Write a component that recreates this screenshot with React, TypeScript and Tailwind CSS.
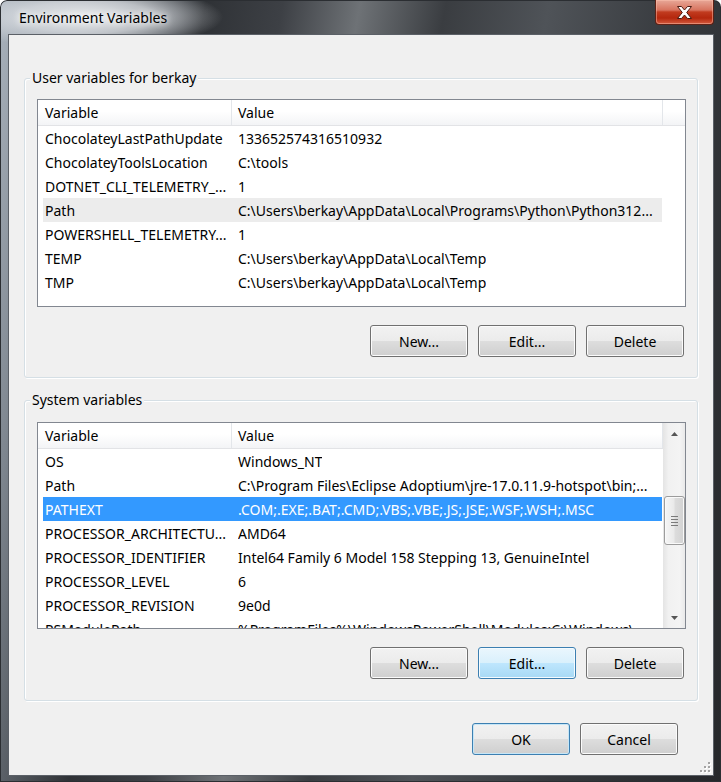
import React from "react";
import clsx from "clsx";

type Row = { name: string; value: string; state?: "hover" | "selected" };

const userVars: Row[] = [
  { name: "ChocolateyLastPathUpdate", value: "133652574316510932" },
  { name: "ChocolateyToolsLocation", value: "C:\\tools" },
  { name: "DOTNET_CLI_TELEMETRY_...", value: "1" },
  { name: "Path", value: "C:\\Users\\berkay\\AppData\\Local\\Programs\\Python\\Python312...", state: "hover" },
  { name: "POWERSHELL_TELEMETRY...", value: "1" },
  { name: "TEMP", value: "C:\\Users\\berkay\\AppData\\Local\\Temp" },
  { name: "TMP", value: "C:\\Users\\berkay\\AppData\\Local\\Temp" },
];

const systemVars: Row[] = [
  { name: "OS", value: "Windows_NT" },
  { name: "Path", value: "C:\\Program Files\\Eclipse Adoptium\\jre-17.0.11.9-hotspot\\bin;..." },
  { name: "PATHEXT", value: ".COM;.EXE;.BAT;.CMD;.VBS;.VBE;.JS;.JSE;.WSF;.WSH;.MSC", state: "selected" },
  { name: "PROCESSOR_ARCHITECTU...", value: "AMD64" },
  { name: "PROCESSOR_IDENTIFIER", value: "Intel64 Family 6 Model 158 Stepping 13, GenuineIntel" },
  { name: "PROCESSOR_LEVEL", value: "6" },
  { name: "PROCESSOR_REVISION", value: "9e0d" },
  { name: "PSModulePath", value: "%ProgramFiles%\\WindowsPowerShell\\Modules;C:\\Windows\\..." },
];

function Button({ label, variant }: { label: string; variant?: "hot" | "default" }) {
  return (
    <div
      className={clsx(
        "flex h-[32px] w-[98px] items-center justify-center rounded-[3px] border text-black",
        variant === "hot"
          ? "border-[#3c7fb1] bg-[linear-gradient(#eaf6fd_0%,#d9f0fc_50%,#bee6fd_51%,#a7d9f5_100%)] shadow-[inset_0_0_0_1px_#f4fbff]"
          : "bg-[linear-gradient(#f2f2f2_0%,#ebebeb_50%,#dddddd_51%,#cfcfcf_100%)]",
        variant === "default" && "border-[#3c7fb1] shadow-[inset_0_0_0_1px_#c6e6f7]",
        !variant && "border-[#707070] shadow-[inset_0_0_0_1px_#fbfbfb]"
      )}
    >
      {label}
    </div>
  );
}

function Header({ filler }: { filler?: boolean }) {
  return (
    <div className="flex h-[26px] shrink-0 items-center border-b border-[#e2e3e6] bg-[linear-gradient(#ffffff_0%,#ffffff_45%,#f3f4f6_100%)]">
      <div className="w-[193px] pl-[7px]">Variable</div>
      <div className="h-full w-px bg-[#e3e6ea]" />
      <div className="w-[430px] pl-[6px]">Value</div>
      <div className="h-full w-px bg-[#e3e6ea]" />
      {filler && <div className="flex-1" />}
    </div>
  );
}

function Rows({ rows }: { rows: Row[] }) {
  return (
    <div className="flex flex-col">
      {rows.map((r) => (
        <div key={r.name} className="flex h-[24px] shrink-0">
          <div
            className={clsx(
              "ml-[5px] flex w-[619px] items-center whitespace-nowrap",
              r.state === "selected" && "bg-[#3399ff] text-white",
              r.state === "hover" && "bg-[#ececec]"
            )}
          >
            <span className="w-[195px] shrink-0 overflow-hidden pl-[2px]">{r.name}</span>
            <span className="overflow-hidden">{r.value}</span>
          </div>
        </div>
      ))}
    </div>
  );
}

function Arrow({ up }: { up?: boolean }) {
  return (
    <div className="flex h-[21px] items-center justify-center">
      <svg width="7" height="4" viewBox="0 0 7 4">
        <polygon points={up ? "0,4 3.5,0 7,4" : "0,0 3.5,4 7,0"} fill="#555" />
      </svg>
    </div>
  );
}

function ScrollBar() {
  return (
    <div className="flex w-[22px] flex-col bg-[linear-gradient(90deg,#e4e4e4_0%,#f1f1f1_25%,#f4f4f4_75%,#e9e9e9_100%)] pl-px">
      <Arrow up />
      <div className="flex-1">
        <div className="mt-[52px] flex h-[49px] flex-col items-center justify-center gap-[2px] rounded-[3px] border border-[#9c9c9c] bg-[linear-gradient(90deg,#f6f6f6_0%,#eaeaea_45%,#dcdcdc_55%,#d2d2d2_100%)] shadow-[inset_0_0_0_1px_#fafafa]">
          <div className="h-px w-[7px] bg-[#7a7a7a]" />
          <div className="h-px w-[7px] bg-[#7a7a7a]" />
          <div className="h-px w-[7px] bg-[#7a7a7a]" />
          <div className="h-px w-[7px] bg-[#7a7a7a]" />
        </div>
      </div>
      <Arrow />
    </div>
  );
}

function GroupBox({ title, children, className }: { title: string; children: React.ReactNode; className?: string }) {
  return (
    <div
      className={clsx(
        "relative ml-[15px] w-[674px] rounded-[3px] border border-[#d5dfe5] shadow-[inset_1px_1px_0_#fff,1px_1px_0_#fff]",
        className
      )}
    >
      <span className="absolute left-[5px] top-[-11px] bg-[#f0f0f0] px-[2px] leading-[20px]">{title}</span>
      {children}
    </div>
  );
}

function Grip() {
  const dots = [
    [8, 0],
    [8, 4],
    [4, 4],
    [8, 8],
    [4, 8],
    [0, 8],
  ];
  return (
    <svg width="11" height="11" viewBox="0 0 11 11">
      {dots.map(([x, y]) => (
        <g key={`${x}-${y}`}>
          <rect x={x + 1} y={y + 1} width="2" height="2" fill="#ffffff" />
          <rect x={x} y={y} width="2" height="2" fill="#a3a3a3" />
        </g>
      ))}
    </svg>
  );
}

export default function App() {
  return (
    <div className="flex h-[782px] w-[721px] flex-col rounded-t-[7px] bg-[radial-gradient(135px_32px_at_88px_17px,rgba(236,238,240,0.97)_0%,rgba(225,228,232,0.72)_50%,rgba(200,205,210,0)_100%),linear-gradient(100deg,#aab3bd_0%,#7d858e_10%,#2f3236_24%,#3d4045_33%,#6e7276_42%,#3a3d41_52%,#4f5358_64%,#36393d_80%,#25272a_100%)] font-['Noto_Sans',sans-serif] text-[14px] text-black shadow-[inset_0_0_0_1px_#2b2e32]">
      {/* title bar */}
      <div className="flex h-[34px] shrink-0 items-start justify-between">
        <div className="ml-[19px] mt-[8px] leading-[20px] [text-shadow:0_0_6px_#fff,0_0_10px_#fff]">
          Environment Variables
        </div>
        <div className="mr-[7px] flex h-[25px] w-[59px] items-center justify-center rounded-b-[4px] border border-t-0 border-[#5e2116] bg-[linear-gradient(#e8a898_0%,#d7735e_42%,#c13b1f_50%,#b4270d_75%,#d35a3f_100%)] shadow-[inset_0_0_0_1px_rgba(255,200,180,0.45)]">
          <svg width="15" height="13" viewBox="0 0 15 13">
            <polygon
              points="0.5,0.5 4.5,0.5 7.5,4 10.5,0.5 14.5,0.5 9.7,6.5 14.5,12.5 10.5,12.5 7.5,9 4.5,12.5 0.5,12.5 5.3,6.5"
              fill="#ffffff"
              stroke="#4a1a10"
              strokeWidth="1"
              strokeLinejoin="round"
            />
          </svg>
        </div>
      </div>

      {/* client area */}
      <div className="ml-[8px] flex h-[742px] w-[706px] flex-col border border-[#5b6067] bg-[#f0f0f0]">
        <GroupBox title="User variables for berkay" className="mt-[43px] h-[300px] pt-[20px]">
          <div className="ml-[12px] flex h-[208px] w-[649px] flex-col overflow-hidden border border-[#828790] bg-white">
            <Header filler />
            <Rows rows={userVars} />
          </div>
          <div className="mt-[18px] flex justify-end gap-[10px] pr-[13px]">
            <Button label="New..." />
            <Button label="Edit..." />
            <Button label="Delete" />
          </div>
        </GroupBox>

        <GroupBox title="System variables" className="mt-[22px] h-[301px] pt-[21px]">
          <div className="ml-[12px] flex h-[207px] w-[649px] overflow-hidden border border-[#828790] bg-white">
            <div className="flex w-[625px] flex-col overflow-hidden">
              <Header />
              <Rows rows={systemVars} />
            </div>
            <ScrollBar />
          </div>
          <div className="mt-[18px] flex justify-end gap-[10px] pr-[13px]">
            <Button label="New..." />
            <Button label="Edit..." variant="hot" />
            <Button label="Delete" />
          </div>
        </GroupBox>

        <div className="mt-[22px] flex flex-1 justify-end">
          <div className="flex h-[32px] gap-[10px]">
            <Button label="OK" variant="default" />
            <Button label="Cancel" />
          </div>
          <div className="mb-[2px] ml-[22px] mr-[2px] self-end">
            <Grip />
          </div>
        </div>
      </div>
    </div>
  );
}
